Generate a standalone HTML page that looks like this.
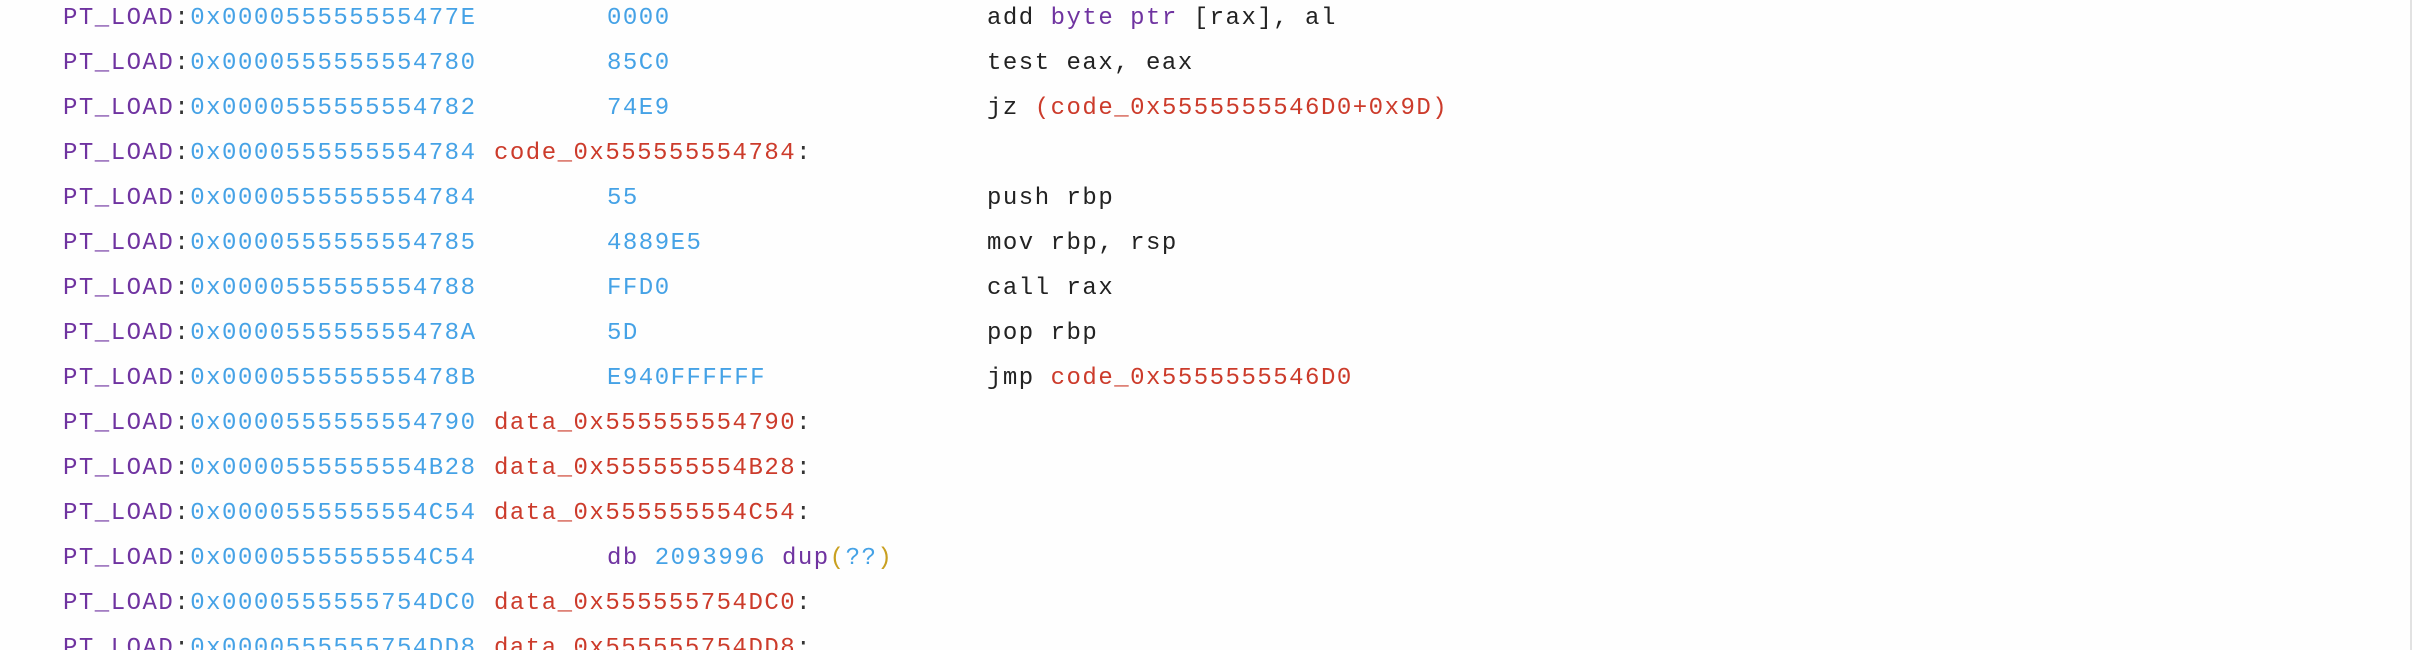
<!DOCTYPE html>
<html><head><meta charset="utf-8"><style>
html,body{margin:0;padding:0;background:#fefefe;width:2412px;height:650px;overflow:hidden;}
body{position:relative;font-family:"Liberation Mono",monospace;font-size:24px;letter-spacing:1.5px;}
.r{position:absolute;left:0;height:45px;line-height:45px;white-space:pre;width:2400px;}
.r span{position:absolute;top:0;}
.r i,.r b{font-style:normal;font-weight:normal;}
.a{left:63px;}
.l{left:494px;}
.b{left:607px;}
.i{left:987px;}
.p{color:#6f33a0}
.h{color:#45a2e6}
.c{color:#333}
.d{color:#cc3b2b}
.k{color:#222}
.y{color:#c9a020}
.bar{position:absolute;right:0;top:0;width:2px;height:650px;background:#e2e2e2;}
</style></head><body>
<div class="r" style="top:-4px"><span class="a"><b class="p">PT_LOAD</b><i class="c">:</i><i class="h">0x000055555555477E</i></span><span class="b h">0000</span><span class="i k">add <i class="p">byte ptr</i> [rax], al</span></div>
<div class="r" style="top:41px"><span class="a"><b class="p">PT_LOAD</b><i class="c">:</i><i class="h">0x0000555555554780</i></span><span class="b h">85C0</span><span class="i k">test eax, eax</span></div>
<div class="r" style="top:86px"><span class="a"><b class="p">PT_LOAD</b><i class="c">:</i><i class="h">0x0000555555554782</i></span><span class="b h">74E9</span><span class="i k">jz <i class="d">(code_0x5555555546D0+0x9D)</i></span></div>
<div class="r" style="top:131px"><span class="a"><b class="p">PT_LOAD</b><i class="c">:</i><i class="h">0x0000555555554784</i></span><span class="l"><i class="d">code_0x555555554784</i><i class="c">:</i></span></div>
<div class="r" style="top:176px"><span class="a"><b class="p">PT_LOAD</b><i class="c">:</i><i class="h">0x0000555555554784</i></span><span class="b h">55</span><span class="i k">push rbp</span></div>
<div class="r" style="top:221px"><span class="a"><b class="p">PT_LOAD</b><i class="c">:</i><i class="h">0x0000555555554785</i></span><span class="b h">4889E5</span><span class="i k">mov rbp, rsp</span></div>
<div class="r" style="top:266px"><span class="a"><b class="p">PT_LOAD</b><i class="c">:</i><i class="h">0x0000555555554788</i></span><span class="b h">FFD0</span><span class="i k">call rax</span></div>
<div class="r" style="top:311px"><span class="a"><b class="p">PT_LOAD</b><i class="c">:</i><i class="h">0x000055555555478A</i></span><span class="b h">5D</span><span class="i k">pop rbp</span></div>
<div class="r" style="top:356px"><span class="a"><b class="p">PT_LOAD</b><i class="c">:</i><i class="h">0x000055555555478B</i></span><span class="b h">E940FFFFFF</span><span class="i k">jmp <i class="d">code_0x5555555546D0</i></span></div>
<div class="r" style="top:401px"><span class="a"><b class="p">PT_LOAD</b><i class="c">:</i><i class="h">0x0000555555554790</i></span><span class="l"><i class="d">data_0x555555554790</i><i class="c">:</i></span></div>
<div class="r" style="top:446px"><span class="a"><b class="p">PT_LOAD</b><i class="c">:</i><i class="h">0x0000555555554B28</i></span><span class="l"><i class="d">data_0x555555554B28</i><i class="c">:</i></span></div>
<div class="r" style="top:491px"><span class="a"><b class="p">PT_LOAD</b><i class="c">:</i><i class="h">0x0000555555554C54</i></span><span class="l"><i class="d">data_0x555555554C54</i><i class="c">:</i></span></div>
<div class="r" style="top:536px"><span class="a"><b class="p">PT_LOAD</b><i class="c">:</i><i class="h">0x0000555555554C54</i></span><span class="b"><i class="p">db</i> <i class="h">2093996</i> <i class="p">dup</i><i class="y">(</i><i class="h">??</i><i class="y">)</i></span></div>
<div class="r" style="top:581px"><span class="a"><b class="p">PT_LOAD</b><i class="c">:</i><i class="h">0x0000555555754DC0</i></span><span class="l"><i class="d">data_0x555555754DC0</i><i class="c">:</i></span></div>
<div class="r" style="top:626px"><span class="a"><b class="p">PT_LOAD</b><i class="c">:</i><i class="h">0x0000555555754DD8</i></span><span class="l"><i class="d">data_0x555555754DD8</i><i class="c">:</i></span></div>
<div class="bar"></div>
</body></html>
